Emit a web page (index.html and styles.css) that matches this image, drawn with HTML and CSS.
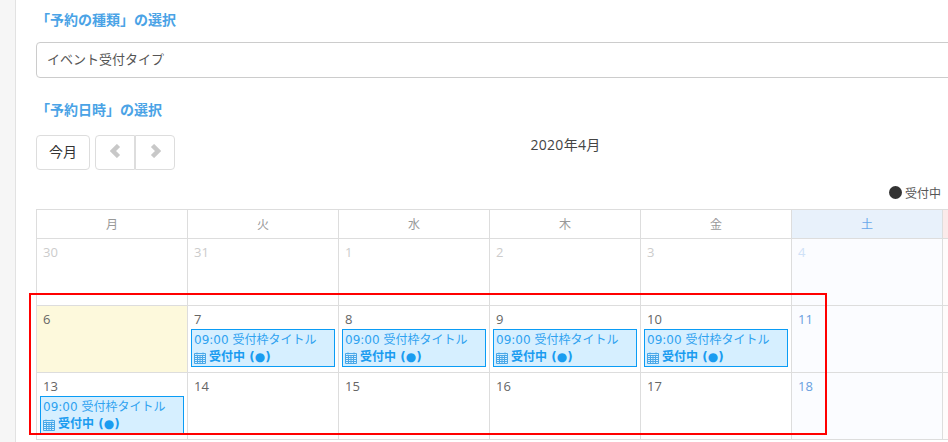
FILE: index.html
```html
<!DOCTYPE html>
<html lang="ja">
<head>
<meta charset="utf-8">
<title>予約</title>
<link rel="stylesheet" href="styles.css">
</head>
<body>
<div class="page">
  <aside class="side"></aside>
  <main class="main">
    <h2 class="heading first">「予約の種類」の選択</h2>
    <div class="select">イベント受付タイプ</div>
    <h2 class="heading second">「予約日時」の選択</h2>
    <div class="toolbar">
      <div class="buttons">
        <button class="btn today">今月</button>
        <div class="group">
          <button class="btn arrow"><svg width="11" height="14" viewBox="0 0 11 14"><path d="M8.500 1.500 3 7l5.500 5.500" fill="none" stroke="#c8c8c8" stroke-width="4.500"/></svg></button>
          <button class="btn arrow"><svg width="11" height="14" viewBox="0 0 11 14"><path d="M2.500 1.500 8 7l-5.500 5.500" fill="none" stroke="#c8c8c8" stroke-width="4.500"/></svg></button>
        </div>
      </div>
      <div class="month">2020年4月</div>
    </div>
    <div class="legend"><span class="dot"></span><span>受付中</span></div>
    <table class="cal">
      <thead>
        <tr><th>月</th><th>火</th><th>水</th><th>木</th><th>金</th><th class="sat">土</th><th class="sun"></th></tr>
      </thead>
      <tbody>
        <tr>
          <td class="off">30</td><td class="off">31</td><td class="off">1</td><td class="off">2</td><td class="off">3</td><td class="sat off">4</td><td class="sun off"></td>
        </tr>
        <tr>
          <td class="today-cell">6</td>
          <td>7<a class="event"><span class="line">09:00 受付枠タイトル</span><span class="line strong"><svg class="cal-icon" viewBox="0 0 12 12"><path d="M.5 1.500h11v10H.5zM.5 3.500h11M.5 5.500h11M.5 7.500h11M.5 9.500h11M3.500 3.500v8M6 3.500v8M8.500 3.500v8M3 .5v2M9 .5v2" fill="none" stroke="#4aa8e8" stroke-width="1"/></svg>受付中 (●)</span></a></td>
          <td>8<a class="event"><span class="line">09:00 受付枠タイトル</span><span class="line strong"><svg class="cal-icon" viewBox="0 0 12 12"><path d="M.5 1.500h11v10H.5zM.5 3.500h11M.5 5.500h11M.5 7.500h11M.5 9.500h11M3.500 3.500v8M6 3.500v8M8.500 3.500v8M3 .5v2M9 .5v2" fill="none" stroke="#4aa8e8" stroke-width="1"/></svg>受付中 (●)</span></a></td>
          <td>9<a class="event"><span class="line">09:00 受付枠タイトル</span><span class="line strong"><svg class="cal-icon" viewBox="0 0 12 12"><path d="M.5 1.500h11v10H.5zM.5 3.500h11M.5 5.500h11M.5 7.500h11M.5 9.500h11M3.500 3.500v8M6 3.500v8M8.500 3.500v8M3 .5v2M9 .5v2" fill="none" stroke="#4aa8e8" stroke-width="1"/></svg>受付中 (●)</span></a></td>
          <td>10<a class="event"><span class="line">09:00 受付枠タイトル</span><span class="line strong"><svg class="cal-icon" viewBox="0 0 12 12"><path d="M.5 1.500h11v10H.5zM.5 3.500h11M.5 5.500h11M.5 7.500h11M.5 9.500h11M3.500 3.500v8M6 3.500v8M8.500 3.500v8M3 .5v2M9 .5v2" fill="none" stroke="#4aa8e8" stroke-width="1"/></svg>受付中 (●)</span></a></td>
          <td class="sat num">11</td>
          <td class="sun num"></td>
        </tr>
        <tr>
          <td>13<a class="event"><span class="line">09:00 受付枠タイトル</span><span class="line strong"><svg class="cal-icon" viewBox="0 0 12 12"><path d="M.5 1.500h11v10H.5zM.5 3.500h11M.5 5.500h11M.5 7.500h11M.5 9.500h11M3.500 3.500v8M6 3.500v8M8.500 3.500v8M3 .5v2M9 .5v2" fill="none" stroke="#4aa8e8" stroke-width="1"/></svg>受付中 (●)</span></a></td>
          <td>14</td><td>15</td><td>16</td><td>17</td>
          <td class="sat num">18</td>
          <td class="sun num"></td>
        </tr>
      </tbody>
    </table>
  </main>
  <div class="mark"></div>
</div>
</body>
</html>
```
FILE: styles.css
```css
* { box-sizing: border-box; }
html, body { margin: 0; padding: 0; height: 442px; overflow: hidden; background: #fff; }
body { font-family: "Open Sans", "Noto Sans CJK JP", sans-serif; font-size: 13px; color: #555; }
.page { position: relative; display: flex; width: 948px; height: 442px; overflow: hidden; }
.side { flex: 0 0 16px; background: #f6f6f6; border-right: 1px solid #e2e2e2; }
.main { flex: 0 0 1100px; padding-left: 20px; }
.heading { margin: 0; font-size: 14px; line-height: 20px; font-weight: 700; color: #4aa3e6; }
.heading.first { padding-top: 10px; height: 42px; }
.heading.second { margin-top: 22px; height: 35px; }
.select { width: 1000px; height: 36px; border: 1px solid #ccc; border-radius: 4px; padding-left: 10px; font-size: 13px; line-height: 33px; color: #555; }
.toolbar { position: relative; display: flex; height: 50px; }
.buttons { display: flex; gap: 5px; align-items: flex-start; }
.btn { height: 35px; padding: 0 0 3px; border: 1px solid #ddd; background: #fff; font-family: inherit; font-size: 13px; color: #333; display: flex; align-items: center; justify-content: center; }
.today { width: 54px; border-radius: 4px; font-size: 14px; }
.group { display: flex; }
.arrow { width: 40px; }
.arrow:first-child { border-radius: 4px 0 0 4px; }
.arrow:last-child { border-radius: 0 4px 4px 0; }
.month { width: 1059px; position: absolute; left: 0; top: 0; text-align: center; font-size: 14px; letter-spacing: .3px; line-height: 20px; color: #444; }
.legend { height: 24px; width: 905px; display: flex; justify-content: flex-end; align-items: flex-start; gap: 3px; font-size: 12px; line-height: 17px; color: #555; }
.dot { width: 13px; height: 13px; border-radius: 50%; background: #333; margin-top: 1px; }
.cal { border-collapse: collapse; table-layout: fixed; width: 1058px; }
.cal th, .cal td { border: 1px solid #ddd; width: 151px; }
.cal th { height: 29px; padding: 0; font-size: 12px; font-weight: 400; color: #999; text-align: center; }
.cal th.sat { background: #e8f1fb; color: #6aa8ea; }
.cal th.sun { background: #fbeaea; color: #e88; }
.cal td { height: 67px; padding: 3px 3px 0; vertical-align: top; font-size: 13px; line-height: 20px; color: #666; text-indent: 3px; }
.cal td.off { color: #ccc; }
.cal td.sat { background: #fbfcff; }
.cal td.sun { background: #fffbfb; }
.cal td.sat.off { color: #cfe1f7; }
.cal td.num.sat { color: #6aa0e0; }
.cal td.today-cell { background: #fdf9dc; }
.event { display: block; height: 38px; border: 1px solid #0a9cf5; background: #d6efff; color: #2fa2f0; padding: 1px 0 0 2px; text-indent: 0; font-family: "DejaVu Sans", "Noto Sans CJK JP", sans-serif; line-height: 18px; font-size: 12px; }
.line { display: block; white-space: nowrap; }
.strong { font-weight: 700; font-size: 12px; color: #1a9cf0; display: flex; align-items: center; gap: 3px; line-height: 17px; }
.cal-icon { width: 12px; height: 12px; flex: none; }
.mark { position: absolute; left: 29px; top: 293px; width: 798px; height: 142px; border: 2px solid #f00; pointer-events: none; }
```
